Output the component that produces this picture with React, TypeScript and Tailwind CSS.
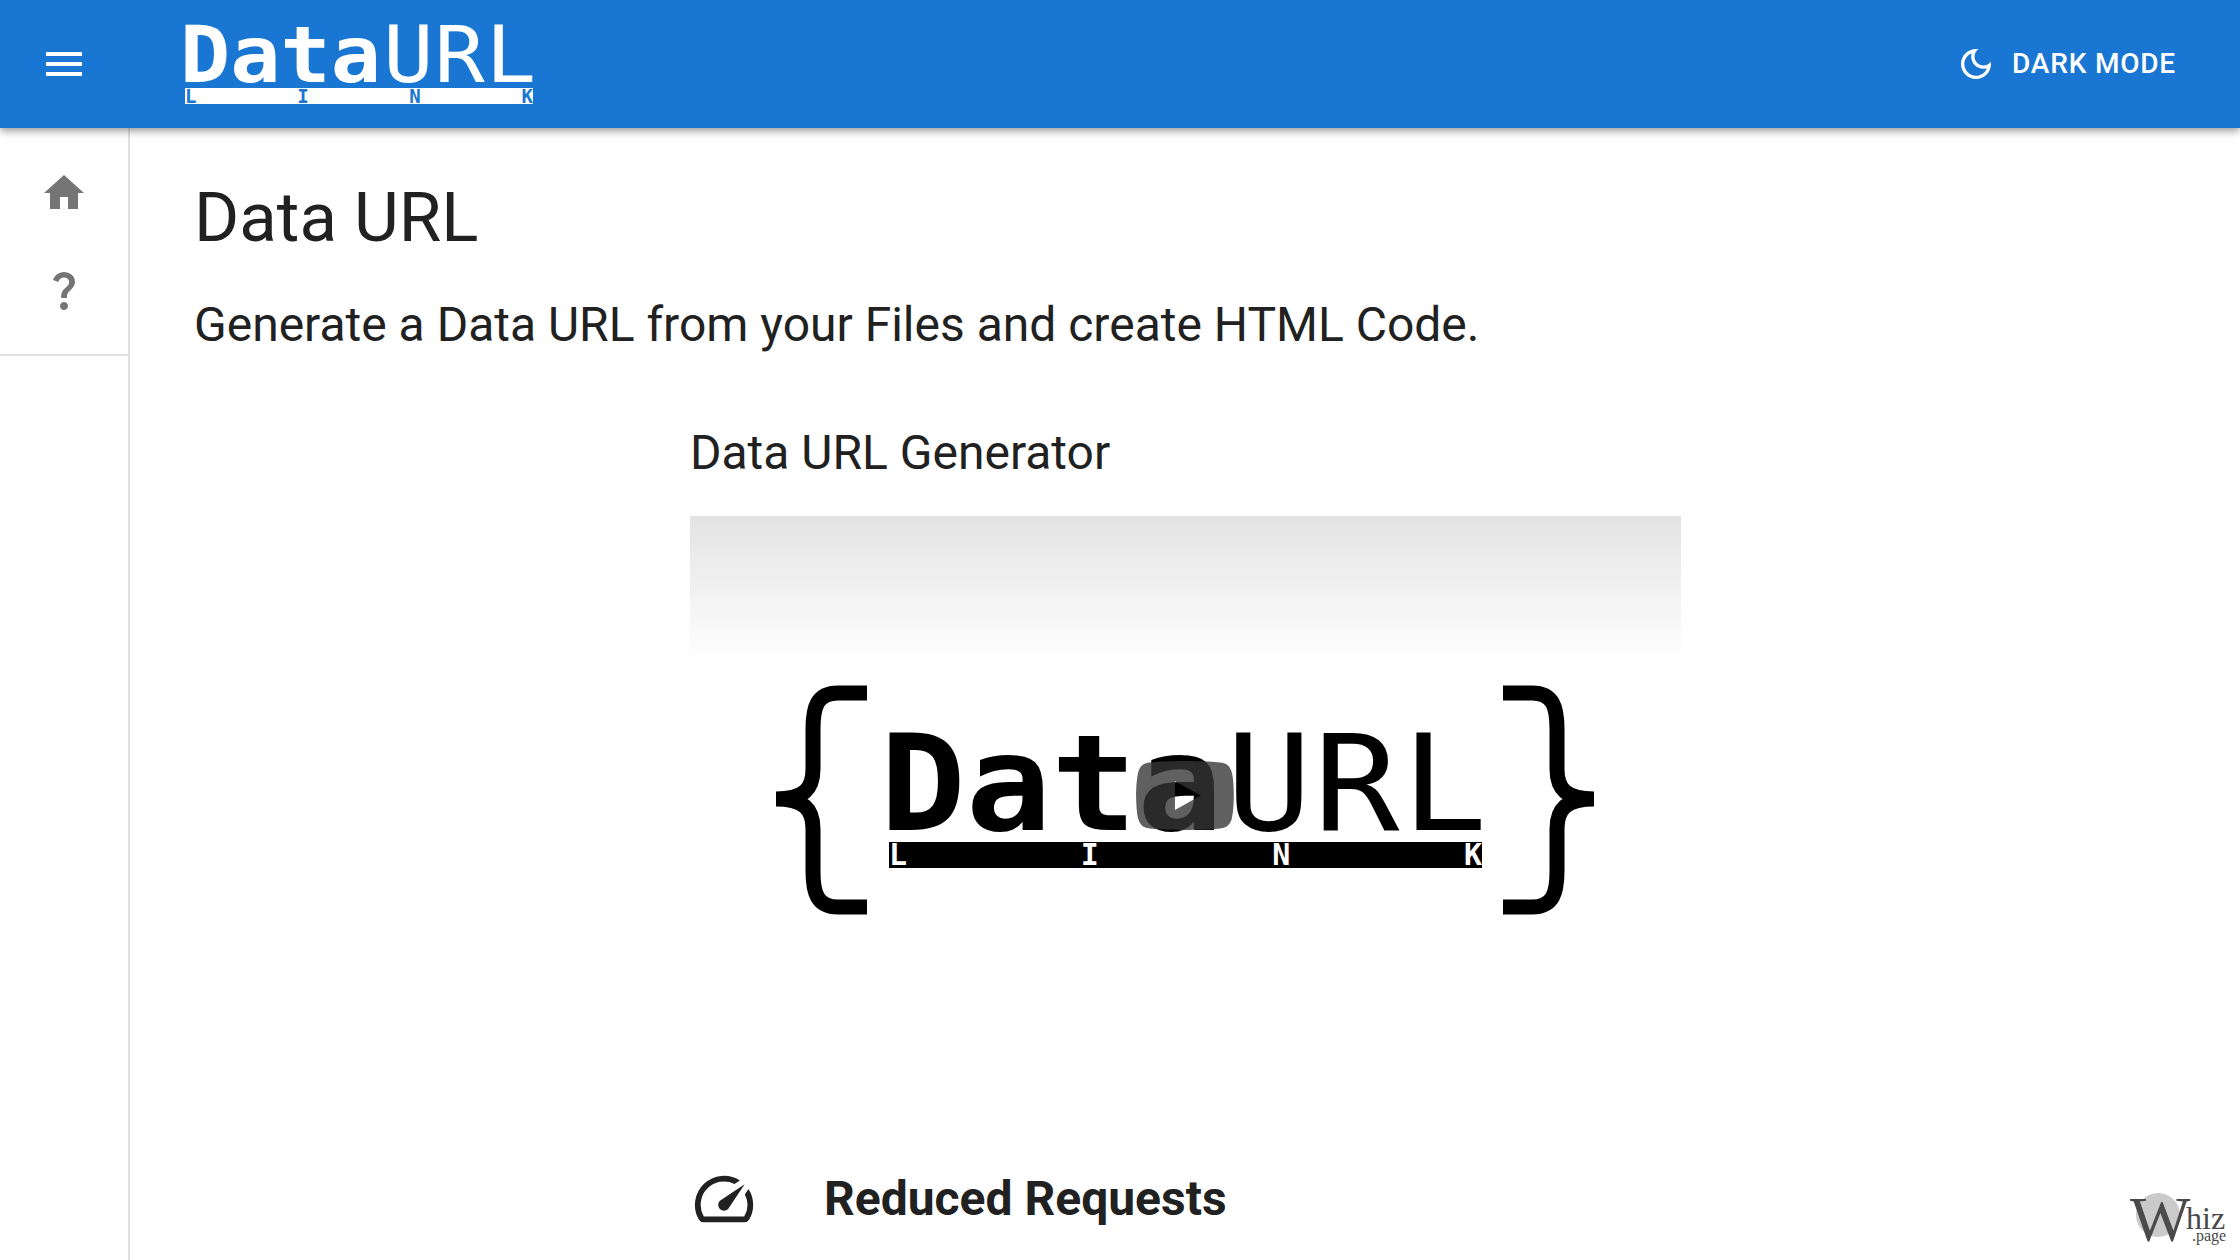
const roboto = "font-['Roboto',sans-serif]";

function MaterialIcon({ d, className }: { d: string; className: string }) {
  return (
    <svg viewBox="0 0 24 24" fill="currentColor" className={className}>
      <path d={d} />
    </svg>
  );
}

const icons = {
  menu: "M3 18h18v-2H3v2zm0-5h18v-2H3v2zm0-7v2h18V6H3z",
  home: "M10 20v-6h4v6h5v-8h3L12 3 2 12h3v8z",
  help: "M11.07 12.85c.77-1.39 2.25-2.21 3.11-3.44.91-1.29.4-3.7-2.18-3.7-1.69 0-2.52 1.28-2.87 2.34L6.54 6.96C7.25 4.83 9.18 3 11.99 3c2.35 0 3.96 1.07 4.78 2.41.7 1.15 1.11 3.3.03 4.9-1.2 1.77-2.35 2.31-2.97 3.45-.25.46-.35.76-.35 2.24h-2.89c-.01-.78-.13-2.05.48-3.15zM14 20c0 1.1-.9 2-2 2s-2-.9-2-2 .9-2 2-2 2 .9 2 2z",
  moon: "M9.37 5.51C9.19 6.15 9.1 6.82 9.1 7.5c0 4.08 3.32 7.4 7.4 7.4.68 0 1.35-.09 1.99-.27C17.45 17.19 14.93 19 12 19c-3.86 0-7-3.14-7-7 0-2.93 1.81-5.45 4.37-6.49zM12 3c-4.97 0-9 4.03-9 9s4.03 9 9 9 9-4.03 9-9c0-.46-.04-.92-.1-1.36-.98 1.37-2.58 2.26-4.4 2.26-2.98 0-5.4-2.42-5.4-5.4 0-1.81.89-3.42 2.26-4.4C12.92 3.04 12.46 3 12 3z",
  speed: "M20.38 8.57l-1.23 1.85a8 8 0 0 1-.22 7.58H5.07A8 8 0 0 1 15.58 6.85l1.85-1.23A10 10 0 0 0 3.35 19a2 2 0 0 0 1.72 1h13.85a2 2 0 0 0 1.74-1 10 10 0 0 0-.27-10.44zM10.59 15.41a2 2 0 0 0 2.83 0l5.66-8.49-8.49 5.66a2 2 0 0 0 0 2.83z",
};

function HeaderLogo() {
  return (
    <div className="w-[348px] ml-[97px] flex flex-col">
      <div className="flex items-baseline h-[64px] leading-[62px] -ml-[5px] origin-left scale-x-[1.07] text-white whitespace-nowrap font-['DejaVu_Sans_Mono',monospace] text-[78px]">
        <span className="font-bold">Data</span>
        <span className="font-normal ml-[2px] tracking-[1px]">URL</span>
      </div>
      <div className="h-[16px] bg-white flex justify-between items-center text-[#1976d2] font-['DejaVu_Sans_Mono',monospace] font-bold text-[19px] leading-none">
        <span>L</span>
        <span>I</span>
        <span>N</span>
        <span>K</span>
      </div>
    </div>
  );
}

function Brace({ flip }: { flip?: boolean }) {
  return (
    <svg viewBox="0 0 91 230" fill="none" stroke="black" strokeWidth="15" className={flip ? "w-[91px] h-[230px] -scale-x-100" : "w-[91px] h-[230px]"}>
      <path d="M91 8H62C41 8 37 22 37 44V84C37 104 28 114 0 114 28 114 37 124 37 144V186C37 208 41 222 62 222H91" />
    </svg>
  );
}

function PlayButton() {
  return (
    <svg viewBox="0 0 68 48" className="absolute left-[446px] top-[245px] w-[98px] h-[69px]">
      <path
        fillRule="evenodd"
        fill="#353535"
        fillOpacity="0.79"
        d="M66.52 7.74c-.78-2.93-2.49-5.41-5.42-6.19C55.79.13 34 0 34 0S12.21.13 6.9 1.55c-2.93.78-4.63 3.26-5.42 6.19C.06 13.05 0 24 0 24s.06 10.95 1.48 16.26c.78 2.93 2.49 5.41 5.42 6.19C12.21 47.87 34 48 34 48s21.79-.13 27.1-1.55c2.93-.78 4.64-3.26 5.42-6.19C67.94 34.95 68 24 68 24s-.06-10.95-1.48-16.26zM45 24 27 14v20z"
      />
    </svg>
  );
}

function VideoThumb() {
  return (
    <div className="relative w-[991px] h-[557px] mt-[33px] bg-white overflow-hidden">
      <div className="h-[144px] bg-gradient-to-b from-[#e3e3e3] to-white" />
      <div className="absolute left-[86px] top-[169px] flex items-start">
        <Brace />
        <div className="w-[593px] ml-[22px] mt-[48px] flex flex-col">
          <div className="flex items-baseline h-[109px] leading-[102px] -ml-[9px] origin-left scale-x-[1.07] text-black whitespace-nowrap font-['DejaVu_Sans_Mono',monospace] text-[133px]">
            <span className="font-bold">Data</span>
            <span className="font-normal ml-[3px] tracking-[2px]">URL</span>
          </div>
          <div className="h-[26px] bg-black flex justify-between items-center text-white font-['DejaVu_Sans_Mono',monospace] font-bold text-[30px] leading-none">
            <span>L</span>
            <span>I</span>
            <span>N</span>
            <span>K</span>
          </div>
        </div>
        <div className="ml-[21px]">
          <Brace flip />
        </div>
      </div>
      <PlayButton />
    </div>
  );
}

function WhizBadge() {
  return (
    <div className="absolute right-[10px] bottom-[12px] w-[100px] h-[50px] text-[#4a4a4a] font-['Liberation_Serif',serif]">
      <div className="absolute left-[6px] top-[-5px] w-[44px] h-[44px] rounded-full bg-[#cacaca]" />
      <span className="absolute left-0 top-[-10px] text-[64px] leading-[64px]">W</span>
      <span className="absolute left-[56px] top-[4px] text-[32px] leading-[32px]">hiz</span>
      <span className="absolute left-[62px] top-[30px] text-[16px] leading-[16px]">.page</span>
    </div>
  );
}

export default function App() {
  return (
    <div className={`relative h-[1260px] overflow-hidden bg-white text-[#212121] ${roboto}`}>
      <header className="relative z-10 h-[128px] bg-[#1976d2] text-white flex items-center pr-[64px] shadow-[0_3px_8px_rgba(0,0,0,0.4)]">
        <MaterialIcon d={icons.menu} className="ml-[40px] w-[48px] h-[48px]" />
        <HeaderLogo />
        <button className="ml-auto flex items-center gap-[16px] text-[28px] font-medium tracking-[0.8px]">
          <MaterialIcon d={icons.moon} className="w-[40px] h-[40px]" />
          DARK MODE
        </button>
      </header>

      <div className="flex h-[1132px]">
        <aside className="w-[130px] shrink-0 border-r-2 border-[#e0e0e0]">
          <div className="h-[228px] border-b-2 border-[#e0e0e0] flex flex-col items-center pt-[41px] gap-[49px] text-[#757575]">
            <MaterialIcon d={icons.home} className="w-[48px] h-[48px]" />
            <MaterialIcon d={icons.help} className="w-[48px] h-[48px]" />
          </div>
        </aside>

        <main className="flex-1 pl-[64px]">
          <h1 className="mt-[52px] text-[69px] leading-[76px] font-normal">Data URL</h1>
          <p className="mt-[39px] text-[48px] leading-[60px]">Generate a Data URL from your Files and create HTML Code.</p>
          <section className="ml-[496px] mt-[68px] w-[991px]">
            <h2 className="text-[48px] leading-[60px] font-normal">Data URL Generator</h2>
            <VideoThumb />
            <div className="mt-[96px] flex items-center">
              <MaterialIcon d={icons.speed} className="w-[70px] h-[70px] -ml-[1px] -my-[5px]" />
              <h3 className="ml-[65px] text-[48px] leading-[60px] font-bold">Reduced Requests</h3>
            </div>
          </section>
        </main>
      </div>

      <WhizBadge />
    </div>
  );
}
